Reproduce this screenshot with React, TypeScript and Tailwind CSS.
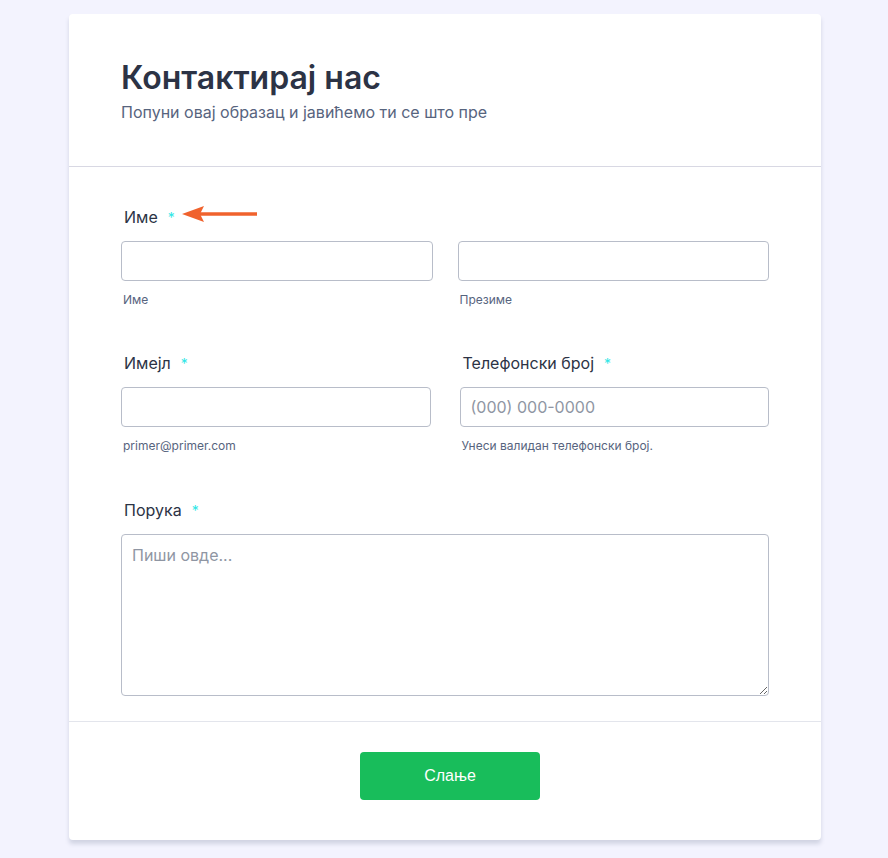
import React from "react";

function Label({ text, className = "" }: { text: string; className?: string }) {
  return (
    <div className={`flex items-center text-[16px] text-[#2c3345] h-[20px] ${className}`}>
      <span>{text}</span>
      <span className="ml-[10px] text-[#2ee6e6] text-[14px]">*</span>
    </div>
  );
}

function Sub({ text }: { text: string }) {
  return (
    <div className="mt-[12px] pl-[2px] text-[12px] text-[#57647e] h-[14px] leading-[14px]">{text}</div>
  );
}

const inputCls =
  "block w-full h-[40px] rounded-[4px] border border-[#b8bdc9] bg-white px-[10px] text-[16px] text-[#2c3345] placeholder:text-[#8f96a3] outline-none";

export default function App() {
  return (
    <div className="min-h-[858px] bg-[#f3f3fe] pt-[14px] pb-[18px] font-['Inter',sans-serif]">
      <div className="ml-[69px] w-[752px] bg-white rounded-[4px] shadow-[0_4px_4px_rgba(87,100,126,0.21)]">
        <div className="px-[52px] pt-[44px] pb-[44px] border-b border-[#d8d8e3]">
          <h1 className="text-[32px] leading-[40px] font-semibold text-[#2c3345]">Контактирај нас</h1>
          <p className="mt-[4px] text-[16px] leading-[20px] text-[#57647e]">
            Попуни овај образац и јавићемо ти се што пре
          </p>
        </div>

        <div className="px-[52px] pt-[40px] pb-[25px]">
          <div className="relative">
            <Label text="Име" className="pl-[3px]" />
            <svg
              className="absolute left-[60px] top-[-5px]"
              width="80"
              height="24"
              viewBox="0 0 80 24"
            >
              <line x1="16" y1="12" x2="76" y2="12" stroke="#f0622d" strokeWidth="3.5" />
              <polygon points="1,12 23,4 19,12 23,20" fill="#f0622d" />
            </svg>
          </div>
          <div className="mt-[14px] grid grid-cols-2 gap-x-[25px]">
            <div>
              <input className={inputCls} />
              <Sub text="Име" />
            </div>
            <div>
              <input className={inputCls} />
              <Sub text="Презиме" />
            </div>
          </div>

          <div className="mt-[46px] grid grid-cols-2 gap-x-[29px]">
            <div>
              <Label text="Имејл" className="pl-[3px]" />
              <div className="mt-[14px]">
                <input className={inputCls} />
              </div>
              <Sub text="primer@primer.com" />
            </div>
            <div>
              <Label text="Телефонски број" className="pl-[3px]" />
              <div className="mt-[14px]">
                <input className={inputCls} placeholder="(000) 000-0000" />
              </div>
              <Sub text="Унеси валидан телефонски број." />
            </div>
          </div>

          <div className="mt-[47px]">
            <Label text="Порука" className="pl-[3px]" />
            <textarea
              className="mt-[14px] block w-full h-[162px] rounded-[4px] border border-[#b8bdc9] bg-white px-[10px] py-[8px] text-[16px] text-[#2c3345] placeholder:text-[#8f96a3] outline-none"
              placeholder="Пиши овде..."
            />
          </div>
        </div>

        <div className="border-t border-[#e3e5ec] pt-[30px] pb-[40px] pl-[10px] flex justify-center">
          <button className="w-[180px] h-[48px] rounded-[4px] bg-[#18bd5b] text-white text-[16px] font-['Liberation_Sans',sans-serif]">
            Слање
          </button>
        </div>
      </div>
    </div>
  );
}
